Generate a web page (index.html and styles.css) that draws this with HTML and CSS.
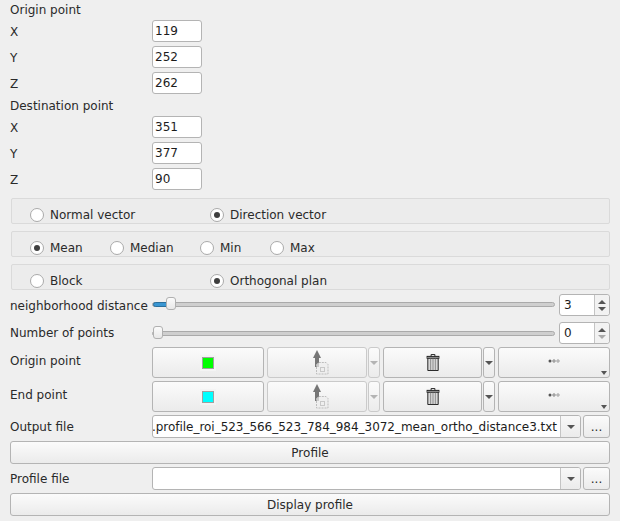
FILE: index.html
```html
<!DOCTYPE html>
<html lang="en">
<head>
<meta charset="UTF-8" />
<title>Profile</title>
<link rel="stylesheet" href="styles.css">
</head>
<body>
  <div class="panel">

    <!-- Origin -->
    <div class="title">Origin point</div>
    <div class="row coord"><span class="lbl">X</span><input class="num" value="119"></div>
    <div class="row coord"><span class="lbl">Y</span><input class="num" value="252"></div>
    <div class="row coord"><span class="lbl">Z</span><input class="num" value="262"></div>

    <!-- Destination -->
    <div class="title">Destination point</div>
    <div class="row coord"><span class="lbl">X</span><input class="num" value="351"></div>
    <div class="row coord"><span class="lbl">Y</span><input class="num" value="377"></div>
    <div class="row coord"><span class="lbl">Z</span><input class="num" value="90"></div>

    <!-- Radio groups -->
    <div class="group two first">
      <label class="radio"><i></i>Normal vector</label>
      <label class="radio on"><i></i>Direction vector</label>
    </div>
    <div class="group four">
      <label class="radio on"><i></i>Mean</label>
      <label class="radio"><i></i>Median</label>
      <label class="radio"><i></i>Min</label>
      <label class="radio"><i></i>Max</label>
    </div>
    <div class="group two">
      <label class="radio"><i></i>Block</label>
      <label class="radio on"><i></i>Orthogonal plan</label>
    </div>

    <!-- Sliders -->
    <div class="row sliderRow first">
      <span class="lbl">neighborhood distance</span>
      <div class="slider"><div class="fill"></div><div class="handle"></div></div>
      <div class="spin">
        <span class="spinVal">3</span>
        <span class="spinBtns"><b class="up"></b><b class="down"></b></span>
      </div>
    </div>
    <div class="row sliderRow second">
      <span class="lbl">Number of points</span>
      <div class="slider zero"><div class="handle"></div></div>
      <div class="spin">
        <span class="spinVal">0</span>
        <span class="spinBtns"><b class="up"></b><b class="down off"></b></span>
      </div>
    </div>

    <!-- Point pickers -->
    <div class="row toolRow first">
      <span class="lbl">Origin point</span>
      <button class="btn colorBtn"><span class="swatch green"></span></button>
      <button class="btn pickBtn">
        <svg width="16" height="25" viewBox="0 0 16 25"><use href="#pick"/></svg>
      </button>
      <button class="btn arrowBtn off"><i class="tri"></i></button>
      <button class="btn trashBtn">
        <svg width="14" height="17" viewBox="0 0 14 18"><use href="#trash"/></svg>
      </button>
      <button class="btn arrowBtn"><i class="tri"></i></button>
      <button class="btn moreBtn">
        <svg width="12" height="4" viewBox="0 0 12 4"><use href="#dots"/></svg>
        <i class="tri corner"></i>
      </button>
    </div>
    <div class="row toolRow">
      <span class="lbl">End point</span>
      <button class="btn colorBtn"><span class="swatch cyan"></span></button>
      <button class="btn pickBtn">
        <svg width="16" height="25" viewBox="0 0 16 25"><use href="#pick"/></svg>
      </button>
      <button class="btn arrowBtn off"><i class="tri"></i></button>
      <button class="btn trashBtn">
        <svg width="14" height="17" viewBox="0 0 14 18"><use href="#trash"/></svg>
      </button>
      <button class="btn arrowBtn"><i class="tri"></i></button>
      <button class="btn moreBtn">
        <svg width="12" height="4" viewBox="0 0 12 4"><use href="#dots"/></svg>
        <i class="tri corner"></i>
      </button>
    </div>

    <!-- Files -->
    <div class="row fileRow output">
      <span class="lbl">Output file</span>
      <div class="combo">
        <div class="comboText"><span class="path">.profile_roi_523_566_523_784_984_3072_mean_ortho_distance3.txt</span></div>
        <div class="comboArrow"><i class="tri"></i></div>
      </div>
      <button class="btn browse">...</button>
    </div>
    <button class="btn wide">Profile</button>
    <div class="row fileRow">
      <span class="lbl">Profile file</span>
      <div class="combo">
        <div class="comboText"></div>
        <div class="comboArrow"><i class="tri"></i></div>
      </div>
      <button class="btn browse">...</button>
    </div>
    <button class="btn wide">Display profile</button>
  </div>

  <!-- Icons -->
  <svg class="defs" width="0" height="0">
    <symbol id="pick" viewBox="0 0 16 25">
      <path d="M4 0 L0 8 H2 V17 H6 V8 H8 Z" fill="#767676"/>
      <path d="M3.5 14.5 L6 12.5 H13 L15 14.5 V24 H3.5 Z" fill="#eeeeee" fill-opacity=".7" stroke="#bdbdbd" stroke-dasharray="2 1"/>
      <rect x="7.5" y="17.5" width="4" height="4" fill="none" stroke="#c8c8c8"/>
    </symbol>
    <symbol id="trash" viewBox="0 0 14 18">
      <path d="M5 2.5 V0.5 H9 V2.5" fill="none" stroke="#222"/>
      <rect x="0.5" y="2.5" width="13" height="2" fill="#ddd" stroke="#111"/>
      <path d="M1.5 4.5 H12.5 V17.5 H1.5 Z" fill="#d8d8d8" stroke="#1c1c1c"/>
      <path d="M4.5 5 V17 M7 5 V17 M9.5 5 V17" stroke="#8a8a8a" stroke-width="1"/>
    </symbol>
    <symbol id="dots" viewBox="0 0 12 4">
      <circle cx="2" cy="2" r="1.5" fill="#555"/>
      <circle cx="6" cy="2" r="1.2" fill="none" stroke="#666" stroke-width=".8"/>
      <circle cx="10" cy="2" r="1.2" fill="none" stroke="#888" stroke-width=".8"/>
    </symbol>
  </svg>
</body>
</html>
```

FILE: styles.css
```css
* {
  margin: 0; padding: 0; box-sizing: border-box;
}

html, body {
  height: 100%;
  background: #efefef;
  overflow: hidden;
}

body {
  font-family: 'DejaVu Sans', sans-serif;
  font-size: 12px;
  color: #2a2a2a;
}

.panel {
  padding: 0 10px;
  display: flex;
  flex-direction: column;
}

.defs {
  position: absolute;
}

.row {
  display: flex;
  align-items: center;
}

.lbl {
  width: 142px;
  flex: none;
}

.title {
  height: 18px;
  line-height: 20px;
}

/* Coordinates */
.coord {
  height: 22px;
  margin-top: 2px;
  margin-bottom: 2px;
}
.coord .lbl {
  padding-top: 2px;
}

.num {
  width: 50px;
  height: 22px;
  border: 1px solid #b4b4b4;
  border-radius: 3px;
  background: #fff;
  font: inherit;
  color: #1c1c1c;
  padding: 0 2px;
  outline: none;
}

/* Radio groups */
.group {
  margin: 7px 0 0 1px;
  height: 26px;
  border: 1px solid #dadada;
  border-radius: 2px;
  background: #ececec;
  display: grid;
  align-items: center;
  padding: 6px 0 0 18px;
}
.group.first {
  margin-top: 6px;
}
.two {
  grid-template-columns: 180px 1fr;
}
.four {
  grid-template-columns: 80px 90px 70px 1fr;
}

.radio {
  display: flex;
  align-items: center;
  gap: 6px;
  padding-top: 1px;
}
.radio i {
  width: 14px;
  height: 14px;
  border: 1px solid #aaa;
  border-radius: 50%;
  background: #fff;
  display: flex;
  align-items: center;
  justify-content: center;
}
.radio.on i::after {
  content: "";
  width: 6px;
  height: 6px;
  border-radius: 50%;
  background: #3f3f3f;
}

/* Sliders */
.sliderRow {
  height: 22px;
}
.sliderRow.first {
  margin-top: 4px;
}
.sliderRow.first .lbl {
  padding-top: 2px;
}
.sliderRow.first .slider {
  margin-bottom: 2px;
}
.sliderRow.second {
  margin-top: 6px;
}
.slider {
  width: 403px;
  height: 5px;
  background: #cfcfcf;
  border: 1px solid #aaa;
  border-radius: 3px;
  position: relative;
  margin-right: 4px;
}
.fill {
  position: absolute;
  left: 0;
  top: -1px;
  width: 16px;
  height: 5px;
  background: #3a96d2;
  border: 1px solid #2b6f9c;
  border-radius: 3px;
}
.handle {
  position: absolute;
  left: 13px;
  top: -6px;
  width: 10px;
  height: 13px;
  background: linear-gradient(#fbfbfb, #e8e8e8);
  border: 1px solid #b0b0b0;
  border-radius: 3px;
}
.zero .handle {
  left: 0;
}

.spin {
  width: 51px;
  height: 22px;
  background: #fff;
  border: 1px solid #b4b4b4;
  border-radius: 3px;
  display: flex;
}
.spinVal {
  flex: 1;
  padding-left: 4px;
  line-height: 20px;
  color: #1c1c1c;
}
.spinBtns {
  width: 15px;
  border-left: 1px solid #c4c4c4;
  background: #f2f2f2;
  display: flex;
  flex-direction: column;
  align-items: center;
  justify-content: center;
  gap: 3px;
  border-radius: 0 3px 3px 0;
}
.up, .down {
  width: 0;
  height: 0;
  border-left: 4px solid transparent;
  border-right: 4px solid transparent;
}
.up {
  border-bottom: 4px solid #555;
}
.down {
  border-top: 4px solid #555;
}
.down.off {
  border-top-color: #aaa;
}

/* Buttons */
.btn {
  font: inherit;
  color: #2a2a2a;
  background: linear-gradient(#fbfbfb, #ebebeb);
  border: 1px solid #b4b4b4;
  border-radius: 3px;
  display: flex;
  align-items: center;
  justify-content: center;
  position: relative;
  flex: none;
}

.tri {
  width: 0;
  height: 0;
  border-left: 4px solid transparent;
  border-right: 4px solid transparent;
  border-top: 4px solid #555;
}
.off .tri {
  border-top-color: #b4b4b4;
}
.corner {
  position: absolute;
  right: 2px;
  bottom: 2px;
  border-left-width: 3px;
  border-right-width: 3px;
}

.toolRow {
  height: 31px;
  margin-top: 3px;
}
.toolRow .lbl {
  padding-bottom: 4px;
}
.colorBtn {
  width: 112px;
  height: 31px;
}
.swatch {
  width: 12px;
  height: 12px;
  border: 1px solid #a0a0a0;
  outline: 2px solid #f4f4f4;
}
.green {
  background: #00ff00;
}
.cyan {
  background: #00ffff;
}
.pickBtn {
  width: 100px;
  height: 31px;
  margin-left: 3px;
  border-color: #cacaca;
}
.pickBtn svg {
  margin-left: 8px;
}
.arrowBtn {
  width: 12px;
  height: 31px;
  margin-left: 1px;
}
.arrowBtn.off {
  border-color: #cacaca;
}
.trashBtn {
  width: 99px;
  height: 31px;
  margin-left: 3px;
}
.moreBtn {
  width: 112px;
  height: 31px;
  margin-left: 3px;
}
.moreBtn svg {
  margin-top: -4px;
}

/* Files */
.fileRow {
  height: 23px;
}
.fileRow.output {
  margin-top: 3px;
}
.combo {
  width: 429px;
  height: 23px;
  border: 1px solid #b4b4b4;
  border-radius: 3px;
  background: #fff;
  display: flex;
  overflow: hidden;
}
.comboText {
  flex: 1;
  min-width: 0;
  display: flex;
  justify-content: flex-end;
  align-items: center;
  padding-right: 3px;
  color: #1c1c1c;
  white-space: nowrap;
}
.path {
  letter-spacing: -0.03px;
}
.comboArrow {
  width: 20px;
  flex: none;
  border-left: 1px solid #c4c4c4;
  background: linear-gradient(#f8f8f8, #ebebeb);
  display: flex;
  align-items: center;
  justify-content: center;
}
.browse {
  width: 27px;
  height: 23px;
  margin-left: 2px;
}
.wide {
  width: 600px;
  height: 23px;
  margin: 3px 0;
}
```
